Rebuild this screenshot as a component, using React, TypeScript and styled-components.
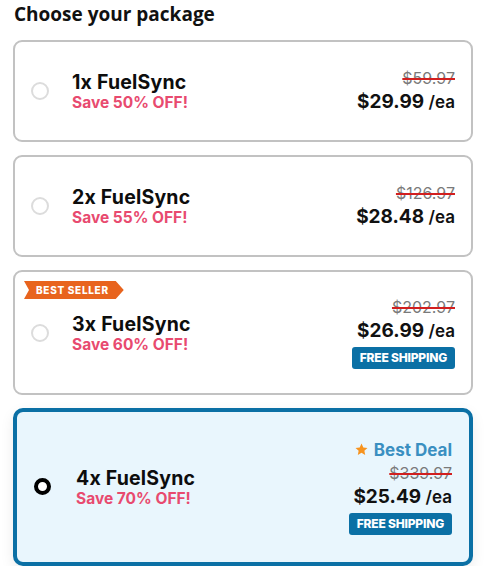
import React from "react";
import styled, { createGlobalStyle, css } from "styled-components";

const GlobalStyle = createGlobalStyle`
  html, body {
    margin: 0;
    padding: 0;
    background: #ffffff;
  }
  * { box-sizing: border-box; }
`;

interface Pack {
  qty: number;
  save: number;
  was: string;
  price: string;
  bestSeller?: boolean;
  freeShipping?: boolean;
  bestDeal?: boolean;
  selected?: boolean;
}

const packs: Pack[] = [
  { qty: 1, save: 50, was: "$59.97", price: "$29.99" },
  { qty: 2, save: 55, was: "$126.97", price: "$28.48" },
  { qty: 3, save: 60, was: "$202.97", price: "$26.99", bestSeller: true, freeShipping: true },
  { qty: 4, save: 70, was: "$339.97", price: "$25.49", freeShipping: true, bestDeal: true, selected: true },
];

const App: React.FC = () => {
  return (
    <Page>
      <GlobalStyle />
      <Heading>Choose your package</Heading>
      <List>
        {packs.map((p) => (
          <Card key={p.qty} $selected={p.selected}>
            {p.bestSeller && <Ribbon>BEST SELLER</Ribbon>}
            <Radio $selected={p.selected} />
            <Info $selected={p.selected}>
              <Name>{p.qty}x FuelSync</Name>
              <Save>Save {p.save}% OFF!</Save>
            </Info>
            <Prices>
              {p.bestDeal && (
                <BestDeal>
                  <svg width="15" height="15" viewBox="0 0 24 24">
                    <path
                      d="M12 2.5l2.9 6.1 6.6.8-4.9 4.6 1.3 6.6L12 17.3l-5.9 3.3 1.3-6.6-4.9-4.6 6.6-.8z"
                      fill="#f7931e"
                    />
                  </svg>
                  Best Deal
                </BestDeal>
              )}
              <Was>{p.was}</Was>
              <Price>
                {p.price} <span>/ea</span>
              </Price>
              {p.freeShipping && <Shipping>FREE SHIPPING</Shipping>}
            </Prices>
          </Card>
        ))}
      </List>
    </Page>
  );
};

export default App;

const Page = styled.div`
  width: 490px;
  padding: 0 17px 0 13px;
  font-family: Inter, "Noto Sans", sans-serif;
`;

const Heading = styled.h2`
  margin: 0;
  padding: 1px 0 0 1px;
  height: 40px;
  font-family: "Open Sans", sans-serif;
  font-size: 19px;
  font-weight: 700;
  line-height: 26px;
  color: #111;
`;

const List = styled.div`
  display: flex;
  flex-direction: column;
  gap: 13px;
`;

const Card = styled.div<{ $selected?: boolean }>`
  position: relative;
  display: flex;
  align-items: center;
  min-height: 102px;
  padding: 24px 16px 24px 16px;
  border: 2px solid #c2c2c2;
  border-radius: 9px;
  background: #fff;

  ${(p) =>
    p.$selected &&
    css`
      border: 4px solid #0b70a5;
      border-radius: 10px;
      background: #e9f6fd;
      padding: 26px 17px 27px 17px;
      box-shadow: 0 5px 14px rgba(0, 0, 0, 0.08);
    `}
`;

const Ribbon = styled.div`
  position: absolute;
  top: 9px;
  left: 9px;
  height: 18px;
  padding: 0 15px 0 12px;
  background: #e8641e;
  color: #fff;
  font-family: Inter, sans-serif;
  font-size: 10px;
  font-weight: 800;
  letter-spacing: 0.7px;
  line-height: 18px;
  clip-path: polygon(0 0, calc(100% - 8px) 0, 100% 50%, calc(100% - 8px) 100%, 0 100%, 5px 50%);
`;

const Radio = styled.span<{ $selected?: boolean }>`
  flex: none;
  width: 18px;
  height: 18px;
  border-radius: 50%;
  border: 2px solid #dcdcdc;
  background: #fff;

  ${(p) =>
    p.$selected &&
    css`
      width: 17px;
      height: 17px;
      border: 4.5px solid #000;
    `}
`;

const Info = styled.div<{ $selected?: boolean }>`
  display: flex;
  flex-direction: column;
  margin-left: ${(p) => (p.$selected ? "25px" : "23px")};
  flex: 1;
`;

const Name = styled.div`
  font-size: 19.5px;
  font-weight: 700;
  line-height: 24px;
  color: #0d0d0d;
  letter-spacing: 0.2px;
`;

const Save = styled.div`
  font-size: 15.5px;
  font-weight: 700;
  line-height: 18px;
  color: #e84a6f;
`;

const Prices = styled.div`
  display: flex;
  flex-direction: column;
  align-items: flex-end;
`;

const BestDeal = styled.div`
  display: flex;
  align-items: center;
  gap: 5px;
  font-size: 17px;
  font-weight: 700;
  line-height: 24px;
  color: #3a8fc1;

  svg {
    margin-top: -1px;
  }
`;

const Was = styled.div`
  font-size: 16px;
  line-height: 22px;
  color: #7a7a7a;
  text-decoration: line-through;
  text-decoration-color: #d21f1f;
  text-decoration-thickness: 1.5px;
`;

const Price = styled.div`
  font-size: 19px;
  font-weight: 700;
  line-height: 26px;
  color: #111;

  span {
    font-weight: 600;
    font-size: 17px;
  }
`;

const Shipping = styled.div`
  margin-top: 3px;
  height: 22px;
  padding: 0 8px;
  border-radius: 3px;
  background: #0b70a5;
  color: #fff;
  font-size: 12px;
  font-weight: 800;
  line-height: 22px;
  letter-spacing: -0.2px;
`;
